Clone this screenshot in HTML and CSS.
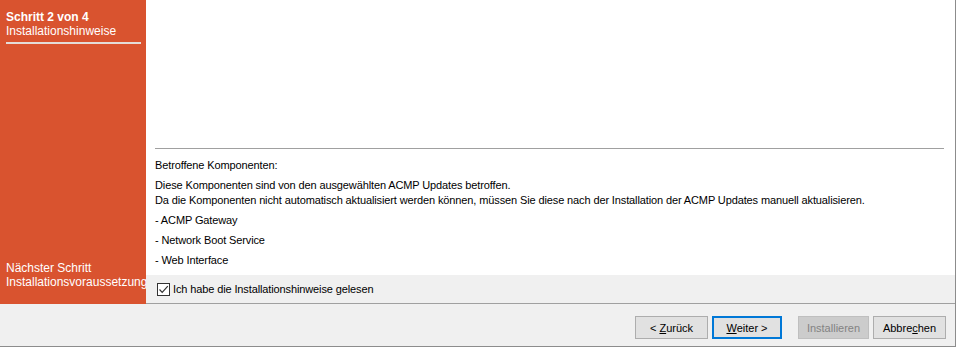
FILE: index.html
```html
<!DOCTYPE html>
<html lang="de">
<head>
    <meta charset="UTF-8">
    <title>ACMP Update - Installationshinweise</title>
    <link rel="stylesheet" href="styles.css">
</head>
<body>
<div class="window">
    <div class="top">
        <aside class="sidebar">
            <div class="step current">
                <div class="step-title">Schritt 2 von 4</div>
                <div>Installationshinweise</div>
            </div>
            <div class="step next">
                <div>Nächster Schritt</div>
                <div>Installationsvoraussetzungen</div>
            </div>
        </aside>
        <main class="page">
            <section class="content">
                <hr class="rule">
                <p>Betroffene Komponenten:</p>
                <p>Diese Komponenten sind von den ausgewählten ACMP Updates betroffen.<br>
                Da die Komponenten nicht automatisch aktualisiert werden können, müssen Sie diese nach der Installation der ACMP Updates manuell aktualisieren.</p>
                <p>- ACMP Gateway</p>
                <p>- Network Boot Service</p>
                <p>- Web Interface</p>
            </section>
            <label class="confirm">
                <span class="checkbox">
                    <svg width="11" height="11" viewBox="0 0 11 11"><path d="M1.5 5.5 L4.2 8.3 L9.8 2.2" fill="none" stroke="#333" stroke-width="1.2"/></svg>
                </span>
                Ich habe die Installationshinweise gelesen
            </label>
        </main>
    </div>
    <footer class="buttons">
        <button>&lt; <u>Z</u>urück</button>
        <button class="default"><u>W</u>eiter &gt;</button>
        <button class="disabled">Installieren</button>
        <button>Abbre<u>c</u>hen</button>
    </footer>
</div>
</body>
</html>
```
FILE: styles.css
```css
* {
    margin: 0; padding: 0; box-sizing: border-box;
}

body {
    font-family: "Liberation Sans", Arial, sans-serif;
    font-size: 11px;
    letter-spacing: -0.12px;
    color: #000;
    background: #fff;
}

.window {
    width: 956px;
    height: 347px;
    background: #f0f0f0;
    border-right: 1px solid #8c8c8c;
    border-bottom: 1px solid #8c8c8c;
    display: flex;
    flex-direction: column;
    overflow: hidden;
}

.top {
    display: flex;
    height: 304px;
}

.sidebar {
    width: 146px;
    flex-shrink: 0;
    background: #d9532f;
    color: #fff;
    font-size: 12px;
    letter-spacing: 0;
    display: flex;
    flex-direction: column;
    justify-content: space-between;
    overflow: hidden;
    white-space: nowrap;
    line-height: 14px;
}

.step.current {
    margin: 10px 5px 0 6px;
    padding-bottom: 4px;
    border-bottom: 2px solid #e4dcd8;
}

.step-title {
    font-weight: bold;
}

.step.next {
    padding: 0 0 15px 6px;
}

.page {
    flex: 1;
    min-width: 0;
    display: flex;
    flex-direction: column;
    border-bottom: 1px solid #a0a0a0;
}

.content {
    flex: 1;
    background: #fff;
    padding: 0 11px 0 9px;
    line-height: 15px;
    overflow: hidden;
}

.rule {
    border: none;
    border-top: 1px solid #a0a0a0;
    margin-top: 148px;
    margin-bottom: 9px;
}

.content p {
    margin-bottom: 5px;
    white-space: nowrap;
}

.confirm {
    height: 28px;
    display: flex;
    align-items: center;
    gap: 3px;
    padding-left: 11px;
}

.checkbox {
    width: 13px;
    height: 13px;
    border: 1px solid #333;
    background: #fff;
    display: flex;
    align-items: center;
    justify-content: center;
}

.buttons {
    flex: 1;
    display: flex;
    justify-content: flex-end;
    align-items: flex-start;
    padding: 12px 9px 0 0;
    gap: 4px;
}

button {
    font: inherit;
    height: 23px;
    width: 73px;
    background: #e1e1e1;
    border: 1px solid #adadad;
    color: #000;
}

.default {
    width: 70px;
    border: 2px solid #0078d7;
}

.disabled {
    width: 71px;
    margin-left: 12px;
    background: #cccccc;
    border-color: #bfbfbf;
    color: #838383;
}
```
